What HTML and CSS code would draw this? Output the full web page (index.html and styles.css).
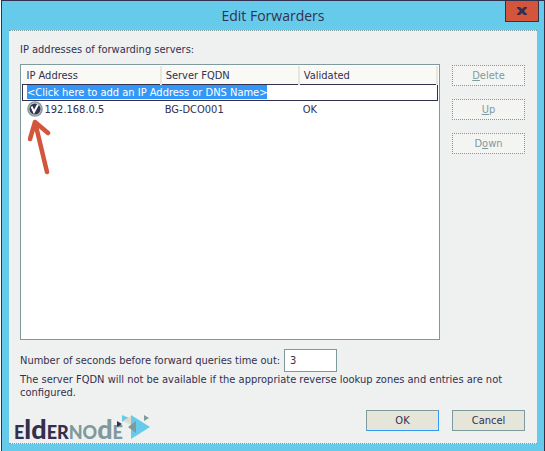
FILE: index.html
```html
<!DOCTYPE html>
<html lang="en">
<head>
<meta charset="utf-8">
<title>Edit Forwarders</title>
<link rel="stylesheet" href="styles.css">
</head>
<body>
<main class="window">
  <header class="titlebar">
    <h1 class="title">Edit Forwarders</h1>
    <button class="close" type="button" aria-label="Close">
      <svg width="10" height="8" viewBox="0 0 10 8"><path d="M0 0h3l2 2 2-2h3v1L7 4l3 3v1H7L5 6 3 8H0V7l3-3-3-3z" fill="#33304f"/></svg>
    </button>
  </header>
  <form class="content">
    <p class="caption">IP addresses of forwarding servers:</p>
    <div class="columns">
      <div class="list">
        <table class="servers">
          <thead>
            <tr><th>IP Address</th><th>Server FQDN</th><th>Validated</th></tr>
          </thead>
          <tbody>
            <tr class="edit"><td colspan="3"><input class="new-address" type="text" aria-label="New address" value="&lt;Click here to add an IP Address or DNS Name&gt;"></td></tr>
            <tr class="server">
              <td><span class="address">
                <svg class="status" width="16" height="16" viewBox="0 0 16 16"><circle cx="8" cy="8" r="7.8" fill="#7f9a9c"/><circle cx="8" cy="8" r="6.4" fill="#c9d1cf"/><circle cx="8" cy="8" r="5.6" fill="#33304f"/><path d="M4.500 5.500 7 11 11 3.500" fill="none" stroke="#fff" stroke-width="2"/></svg>
                192.168.0.5</span></td>
              <td>BG-DCO001</td>
              <td>OK</td>
            </tr>
          </tbody>
        </table>
        <svg class="arrow" width="26" height="56" viewBox="0 0 26 56"><path d="M19 53 7 3M2 20 7 3 20 14" fill="none" stroke="#d3553c" stroke-width="4.500" stroke-linecap="round" stroke-linejoin="round"/></svg>
      </div>
      <div class="actions">
        <button class="button" type="button" disabled><u>D</u>elete</button>
        <button class="button" type="button" disabled><u>U</u>p</button>
        <button class="button" type="button" disabled>D<u>o</u>wn</button>
      </div>
    </div>
    <div class="timeout">
      <label for="seconds">Number of seconds before forward queries time out:</label>
      <input class="seconds" id="seconds" type="text" value="3">
    </div>
    <p class="note">The server FQDN will not be available if the appropriate reverse lookup zones and entries are not configured.</p>
    <footer class="footer">
      <div class="logo">
        <span class="wordmark"><span>E</span><span class="tall">ld</span><span>ER</span><span class="grey">NO<span class="tall">d</span>E</span></span>
        <svg class="mark" width="33" height="25" viewBox="0 0 33 25"><path d="M14 0 33 12 14 24z" fill="#66cbea"/><path d="M5 0 12 3 5 7z" fill="#66cbea"/><path d="M14 1v9L6 6z" fill="#dedccb"/><path d="M19 6v12L11 12z" fill="#7f9a9c"/><path d="M27 0 32 3 27 6z" fill="#7f9a9c"/><path d="M0 6 5 9 0 12z" fill="#33304f"/></svg>
      </div>
      <button class="button ok" type="button">OK</button>
      <button class="button" type="button">Cancel</button>
    </footer>
  </form>
</main>
</body>
</html>
```
FILE: styles.css
```css
* { box-sizing: border-box; }

body {
  margin: 0 0 0 1px;
  color: #33304f;
  background: #fff;
  font: 11px/13px "DejaVu Sans Condensed", "Noto Sans", sans-serif;
}

.window {
  display: flex;
  flex-direction: column;
  min-height: 100vh;
  padding: 0 7px 7px;
  background: #66cbea;
  border: 1px solid #33304f;
  border-bottom: 0;
}

.titlebar {
  position: relative;
  display: flex;
  justify-content: center;
  height: 29px;
}

.title {
  margin: 0;
  font: 14px/29px "Open Sans", sans-serif;
}

.close {
  position: absolute;
  top: 0;
  right: -2px;
  display: flex;
  align-items: center;
  justify-content: center;
  width: 34px;
  height: 21px;
  padding: 0;
  background: #d3553c;
  border: 1px solid #33304f;
  border-top: 0;
}

.content {
  flex: 1;
  display: flex;
  flex-direction: column;
  padding: 12px 12px 0 11px;
  background: #eff1f0;
  border-top: 1px dotted #7f9a9c;
  border-bottom: 1px dotted #7f9a9c;
}

.caption, .note { margin: 0; }

.columns {
  flex: 1;
  display: grid;
  grid-template-columns: 1fr 73px;
  gap: 12px;
  margin-top: 8px;
}

.list {
  position: relative;
  padding: 1px;
  background: #fff;
  border: 1px solid #7f9a9c;
}

.servers {
  width: 100%;
  table-layout: fixed;
  border-collapse: collapse;
}

.servers th {
  height: 18px;
  padding: 2px 5px 0 4px;
  font-weight: normal;
  text-align: left;
  background: #f9f9f6;
  border-right: 2px solid #e8e7dc;
}

.servers td { height: 18px; padding: 0 5px 0 4px; }

.servers .edit td {
  height: 16px;
  line-height: 0;
  border: 1px solid #33304f;
}

.new-address {
  width: 240px;
  height: 14px;
  padding: 0;
  color: #fff;
  background: #3397f7;
  border: 0;
  font: inherit;
}

.address { display: flex; align-items: center; gap: 2px; }

.arrow { position: absolute; left: 7px; top: 54px; }

.actions { display: flex; flex-direction: column; gap: 13px; padding-top: 1px; }

.button {
  width: 73px;
  height: 21px;
  padding: 0;
  color: #33304f;
  background: #e6e5da;
  border: 1px solid #7f9a9c;
  font: inherit;
}

.button:disabled { color: #7f9a9c; background: #f4f5f3; border-style: dotted; }

.ok { border-right-color: #3397f7; border-bottom-color: #3397f7; }

.timeout {
  display: flex;
  align-items: center;
  gap: 4px;
  margin-top: 9px;
}

.timeout label { white-space: nowrap; }

.seconds {
  width: 53px;
  height: 23px;
  padding: 0 5px;
  color: #33304f;
  background: #fff;
  border: 1px solid #7f9a9c;
  font: inherit;
}

.note { margin-top: 1px; }

.footer {
  display: flex;
  gap: 13px;
  margin-top: 11px;
}

.logo {
  display: flex;
  flex: 1;
  height: 33px;
  margin-left: -6px;
}

.wordmark {
  align-self: flex-end;
  font: 900 18px/22px Lato, sans-serif;
}

.tall { font-size: 27px; }

.grey { color: #7f9a9c; }

.mark { margin: 5px 0 0 -6px; }
```
